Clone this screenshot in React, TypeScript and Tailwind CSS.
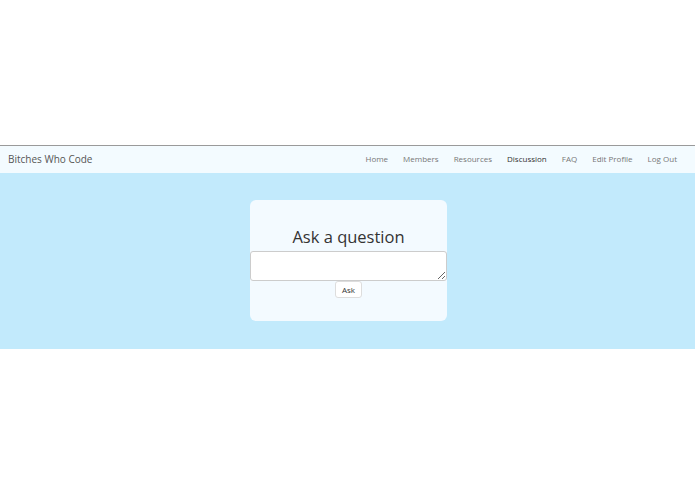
const links = ['Home', 'Members', 'Resources', 'Discussion', 'FAQ', 'Edit Profile', 'Log Out'];

export default function App() {
  return (
    <div className="min-h-[494px] bg-white" style={{ fontFamily: '"Open Sans", sans-serif' }}>
      <div className="h-[145px]" />
      <nav className="flex h-[28px] items-center justify-between border-t border-[#9a9a9a] bg-[#f3fbff] pl-[8px] pr-[18px]">
        <span className="text-[10px] text-[#555]">Bitches Who Code</span>
        <ul className="-mt-px flex gap-[15px] text-[8px] leading-none">
          {links.map((l) => (
            <li key={l} className={l === 'Discussion' ? 'text-[#333]' : 'text-[#777]'}>
              {l}
            </li>
          ))}
        </ul>
      </nav>
      <section className="flex justify-center bg-[#c2eafc] pt-[27px] pb-[28px] pl-[2px]">
        <div className="flex w-[197px] flex-col items-center rounded-[6px] bg-[#f3faff] pt-[22px] pb-[23px]">
          <h1 className="text-[16.5px] leading-[29px] text-[#333]">Ask a question</h1>
          <textarea className="h-[30px] w-full resize-y rounded-[3px] border border-[#ccc] bg-white" />
          <button className="h-[17px] rounded-[3px] border border-[#ddd] bg-white px-[6px] text-[8px] leading-none text-[#333]">
            Ask
          </button>
        </div>
      </section>
    </div>
  );
}
